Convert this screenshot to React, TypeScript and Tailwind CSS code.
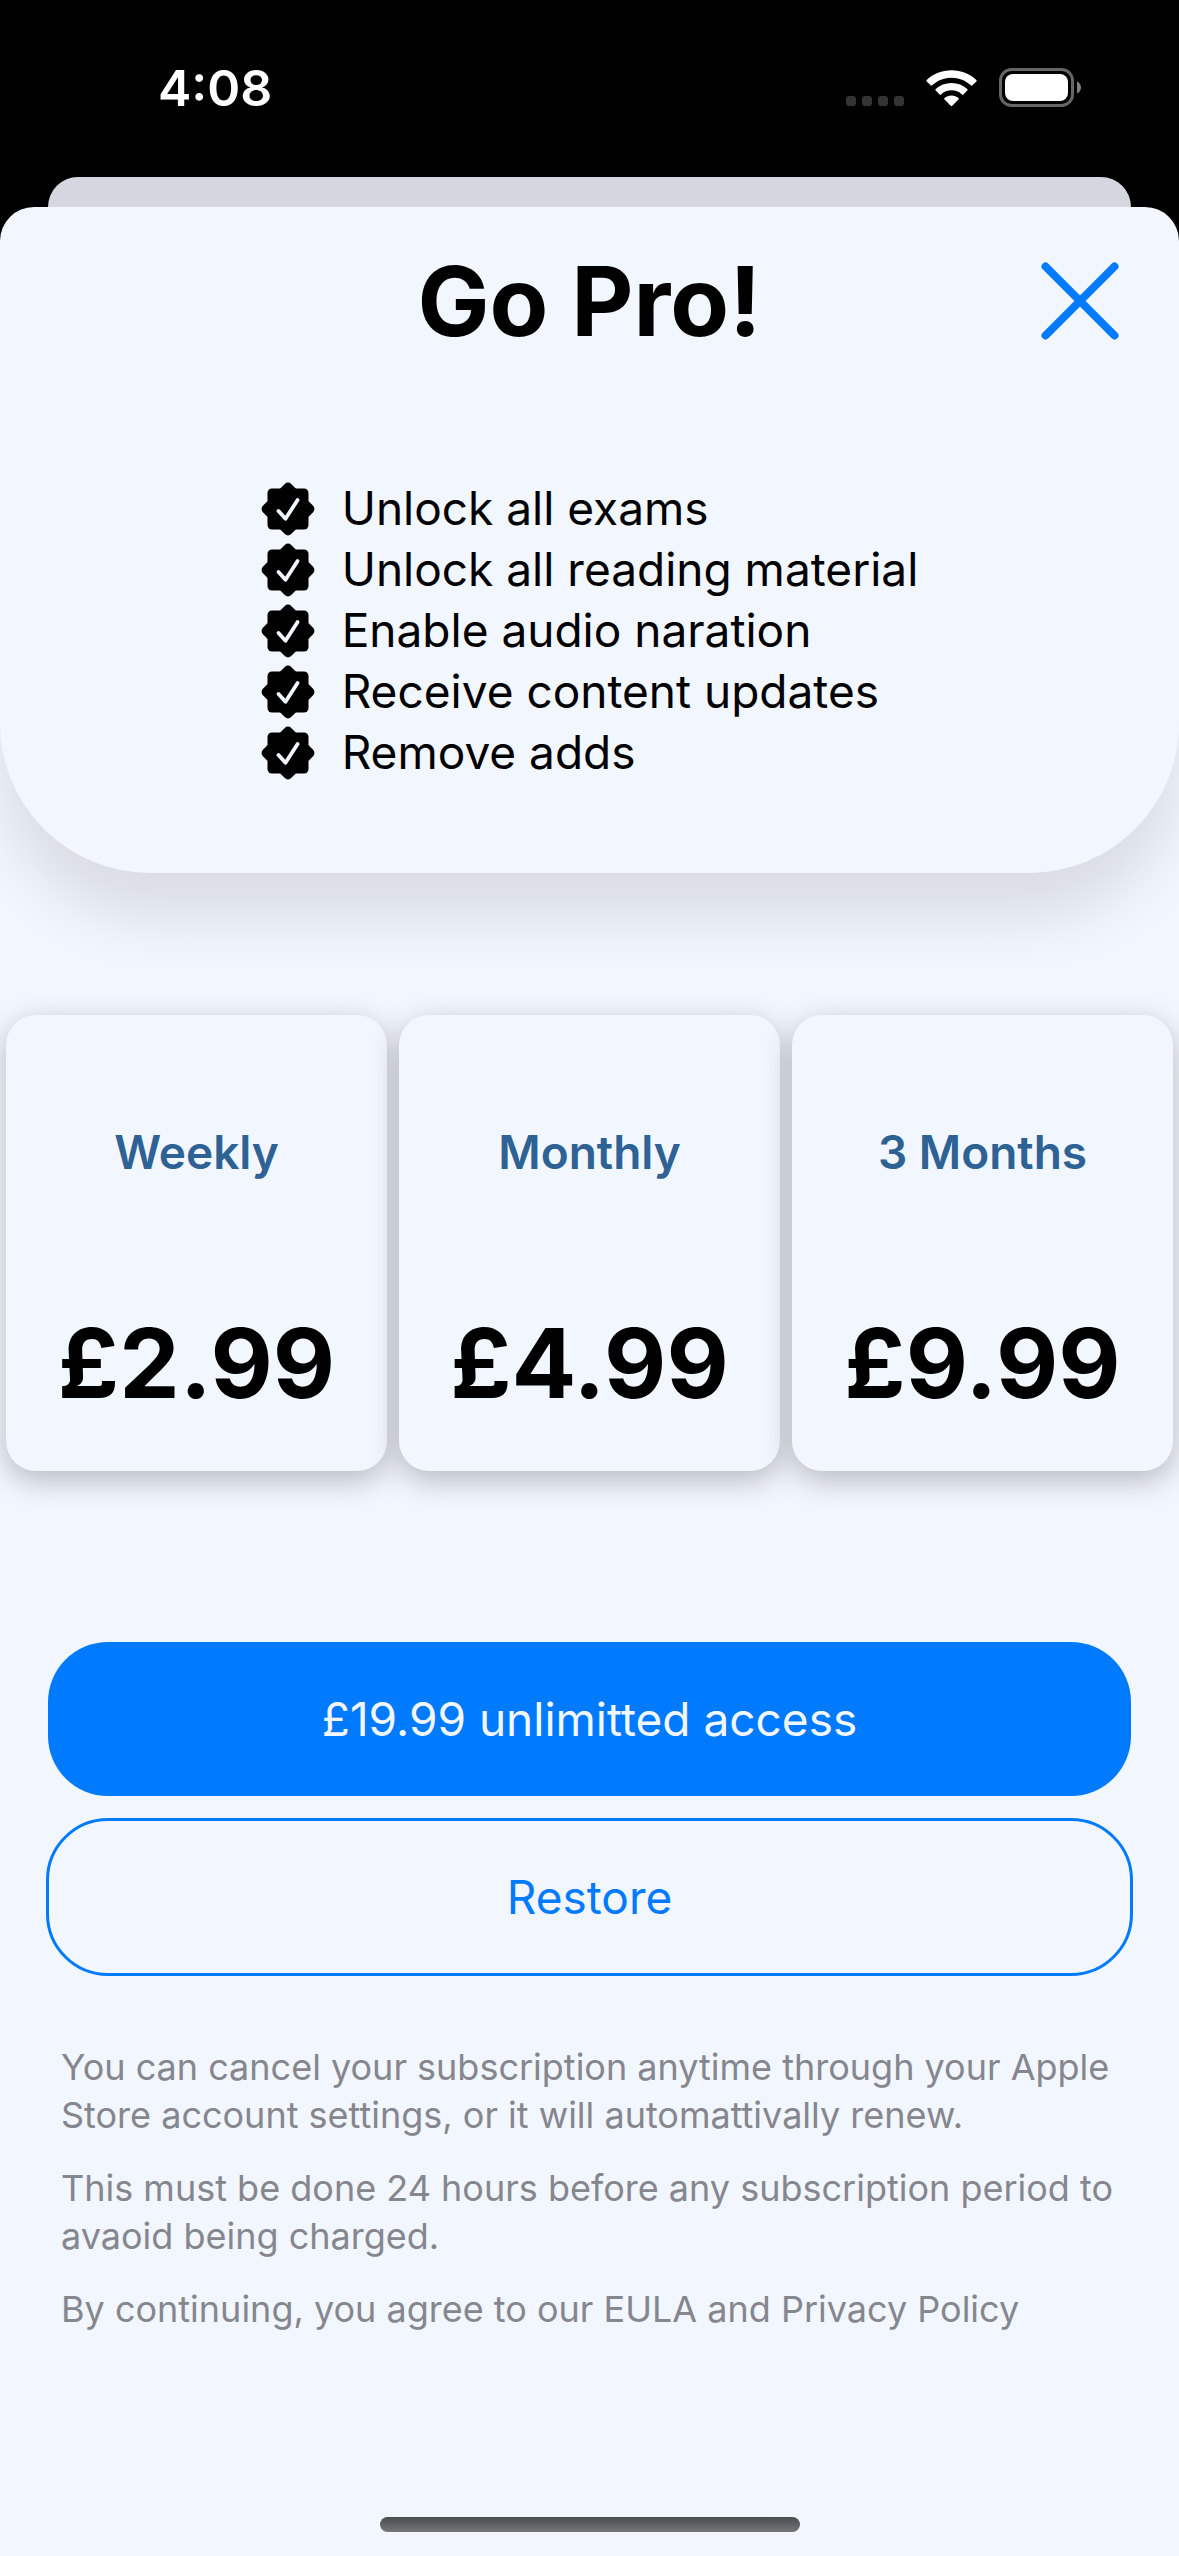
import React from "react";

const features = [
  "Unlock all exams",
  "Unlock all reading material",
  "Enable audio naration",
  "Receive content updates",
  "Remove adds",
];

const plans = [
  { name: "Weekly", price: "£2.99" },
  { name: "Monthly", price: "£4.99" },
  { name: "3 Months", price: "£9.99" },
];

function WifiIcon() {
  return (
    <svg className="ml-[22px] h-[38px] w-[51px]" viewBox="0 0 52 38" aria-hidden="true">
      <path
        fill="#fff"
        d="M26 1C16.200 1 7.300 4.700.700 10.800q-.8.800 0 1.600l4 3.900q.7.700 1.500 0C11.500 11.500 18.400 8.600 26 8.600s14.500 2.900 19.800 7.700q.8.700 1.500 0l4-3.900q.8-.8 0-1.600C44.700 4.700 35.800 1 26 1Z"
      />
      <path
        fill="#fff"
        d="M26 13.800c-6.200 0-11.800 2.300-16.100 6.100q-.8.800 0 1.600l4 4q.700.700 1.500 0c2.800-2.500 6.500-4.100 10.600-4.100s7.800 1.600 10.600 4.100q.8.700 1.500 0l4-4q.8-.8 0-1.600C37.800 16.100 32.200 13.800 26 13.800Z"
      />
      <path
        fill="#fff"
        d="M26 26.600c-2.700 0-5.200 1-7.100 2.600q-.8.800 0 1.600l6.300 6.400q.8.800 1.600 0l6.300-6.400q.8-.8 0-1.600C31.200 27.600 28.700 26.600 26 26.600Z"
      />
    </svg>
  );
}

function BatteryIcon() {
  return (
    <svg className="ml-[22px] h-[39px] w-[83px]" viewBox="0 0 83 39" aria-hidden="true">
      <rect x="1.500" y="1.500" width="72" height="36" rx="11" fill="none" stroke="#666" strokeWidth="3" />
      <rect x="6" y="6" width="63" height="27" rx="8" fill="#fff" />
      <path d="M78 13.500c2.600 1.200 4 3.400 4 6s-1.400 4.800-4 6Z" fill="#808080" />
    </svg>
  );
}

function SealIcon() {
  return (
    <svg className="size-[54px] shrink-0" viewBox="0 0 54 54" aria-hidden="true">
      <rect x="6.500" y="6.500" width="41" height="41" rx="4.500" />
      <rect x="7" y="7" width="40" height="40" rx="4.500" transform="rotate(45 27 27)" />
      <path
        d="M17.500 29 24.500 36.800 36.600 18"
        fill="none"
        stroke="#f2f6ff"
        strokeWidth="3.800"
        strokeLinecap="round"
        strokeLinejoin="round"
      />
    </svg>
  );
}

function StatusBar() {
  return (
    <div className="flex h-[177px] items-start justify-between pt-[68px] pr-[97px] pl-[158px]">
      <time className="text-[50px] leading-[40px] font-semibold text-white">4:08</time>
      <div className="flex items-end">
        <div className="mb-px flex gap-[6px]">
          {[0, 1, 2, 3].map((dot) => (
            <span key={dot} className="size-[10px] rounded-[3px] bg-[#333]" />
          ))}
        </div>
        <WifiIcon />
        <BatteryIcon />
      </div>
    </div>
  );
}

export default function App() {
  return (
    <div className="flex min-h-screen flex-col bg-black font-[Inter,sans-serif] text-black">
      <StatusBar />
      <div className="mx-12 h-[30px] rounded-t-[30px] bg-[#d4d7e0]" />
      <main className="flex grow flex-col overflow-hidden rounded-t-[34px] bg-[#f2f6ff]">
        <header className="rounded-b-[150px] pb-[90px] shadow-[0_45px_60px_rgba(0,0,0,0.1)]">
          <div className="grid grid-cols-[1fr_auto_1fr] items-center px-[60px] pt-[36px]">
            <h1 className="col-start-2 text-[96px] leading-[116px] font-bold">Go Pro!</h1>
            <button type="button" aria-label="Close" className="cursor-pointer justify-self-end">
              <svg className="size-[78px]" viewBox="0 0 78 78" aria-hidden="true">
                <path d="M4.500 4.500 73.500 73.500M73.500 4.500 4.500 73.500" stroke="#007aff" strokeWidth="8" strokeLinecap="round" />
              </svg>
            </button>
          </div>
          <ul className="mx-auto mt-[119px] w-fit">
            {features.map((feature) => (
              <li key={feature} className="flex items-center gap-[27px] text-[46px] leading-[61px]">
                <SealIcon />
                {feature}
              </li>
            ))}
          </ul>
        </header>

        <section aria-label="Plans" className="mt-[142px] grid grid-cols-3 gap-3 px-1.5">
          {plans.map((plan) => (
            <button
              key={plan.name}
              type="button"
              className="flex cursor-pointer flex-col items-center rounded-[30px] bg-[#f2f6ff] pt-[106px] pb-[50px] shadow-[0_9px_30px_rgba(0,0,0,0.25)]"
            >
              <span className="text-[46px] leading-[62px] font-semibold text-[#2e6294]">{plan.name}</span>
              <span className="mt-[122px] text-[96px] leading-[116px] font-bold">{plan.price}</span>
            </button>
          ))}
        </section>

        <section aria-label="Purchase" className="mt-[171px] flex flex-col gap-6 px-12">
          <button
            type="button"
            className="h-[154px] cursor-pointer rounded-[60px] bg-[#007aff] text-[46px] text-[#f2f6ff]"
          >
            £19.99 unlimitted access
          </button>
          <button
            type="button"
            className="h-[154px] cursor-pointer rounded-[60px] text-[46px] text-[#007aff] outline-3 -outline-offset-1 outline-[#007aff]"
          >
            Restore
          </button>
        </section>

        <footer className="mt-[69px] flex flex-col gap-[25px] px-[61px] text-[36px] leading-[48px] text-[#85868e]">
          <p>
            You can cancel your subscription anytime through your Apple Store account settings, or it will automattivally
            renew.
          </p>
          <p>This must be done 24 hours before any subscription period to avaoid being charged.</p>
          <p>
            By continuing, you agree to our <a href="#eula">EULA</a> and <a href="#privacy">Privacy Policy</a>
          </p>
        </footer>

        <div className="mx-auto mt-auto mb-6 h-[15px] w-[420px] rounded-full bg-linear-to-b from-[#4b4c50] to-[#75777b]" />
      </main>
    </div>
  );
}
